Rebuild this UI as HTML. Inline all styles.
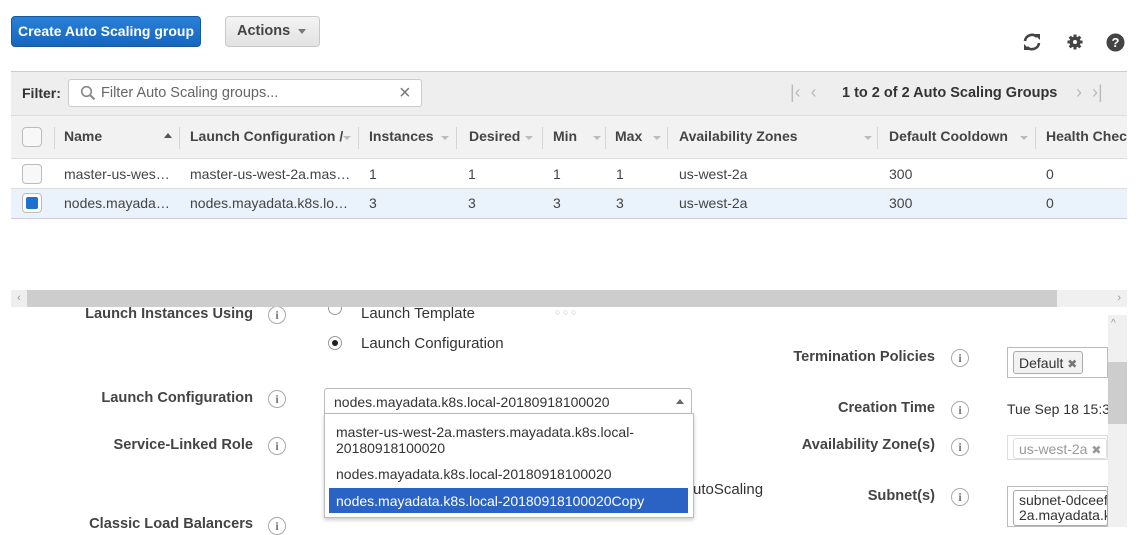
<!DOCTYPE html>
<html><head><meta charset="utf-8"><style>
*{box-sizing:border-box;margin:0;padding:0}
body{width:1141px;height:527px;overflow:hidden;background:#fff;font-family:"Liberation Sans",Arial,sans-serif;font-size:14px;color:#333;position:relative}
.a{position:absolute;white-space:nowrap}
.b{font-weight:bold;color:#333}
.hd{position:absolute;top:128px;font-weight:bold;color:#444;font-size:14px}
.dv{position:absolute;top:127px;width:1px;height:22px;background:#d5d5d5}
.ar{position:absolute;top:136px;width:0;height:0;border-left:4px solid transparent;border-right:4px solid transparent;border-top:4px solid #bbb}
.c{position:absolute;font-size:14px;color:#444}
.cb{position:absolute;left:22px;width:20px;height:20px;border:1px solid #bbb;border-radius:4px;background:#f8f8f8}
.info{position:absolute;width:18px;height:18px;border:1px solid #aaa;border-radius:50%;color:#777;font-size:12px;text-align:center;line-height:16px;font-family:"Liberation Serif",serif;font-weight:bold}
.lbl{position:absolute;font-weight:bold;color:#444;text-align:right;width:300px;font-size:14.6px}
</style></head><body>
<div class="a" style="left:11px;top:16px;width:190px;height:31px;border-radius:4px;background:linear-gradient(#2a80d8,#1666bf);border:1px solid #15599f;color:#fff;font-weight:bold;font-size:14px;line-height:29px;text-align:center">Create Auto Scaling group</div>
<div class="a" style="left:225px;top:16px;width:95px;height:31px;border-radius:4px;background:linear-gradient(#f4f4f4,#e2e2e2);border:1px solid #c8c8c8;color:#444;font-weight:bold;font-size:14.5px;line-height:29px;padding-left:11px">Actions <span style="display:inline-block;border-left:4px solid transparent;border-right:4px solid transparent;border-top:5px solid #777;vertical-align:middle;margin-left:4px"></span></div>
<svg class="a" style="left:1021px;top:32px" width="22" height="20" viewBox="0 0 22 20"><path d="M4 9a7 7 0 0 1 12-4" fill="none" stroke="#444" stroke-width="2.6"/><path d="M18 11a7 7 0 0 1-12 4" fill="none" stroke="#444" stroke-width="2.6"/><path d="M13 2l6 0 0 6z" fill="#444"/><path d="M9 18l-6 0 0-6z" fill="#444"/></svg>
<svg class="a" style="left:1066px;top:33px" width="18" height="18" viewBox="0 0 18 18"><g fill="#444"><circle cx="9" cy="9" r="5.5"/><rect x="7.5" y="1.5" width="3" height="15"/><rect x="1.5" y="7.5" width="15" height="3"/><rect x="7.5" y="1.5" width="3" height="15" transform="rotate(45 9 9)"/><rect x="7.5" y="1.5" width="3" height="15" transform="rotate(-45 9 9)"/></g><circle cx="9" cy="9" r="2" fill="#fff"/></svg>
<svg class="a" style="left:1106px;top:33px" width="19" height="19" viewBox="0 0 19 19"><circle cx="9.5" cy="9.5" r="9" fill="#444"/><text x="9.5" y="14" text-anchor="middle" fill="#fff" font-size="13" font-weight="bold" font-family="Liberation Sans">?</text></svg>

<div class="a" style="left:11px;top:71px;width:1116px;height:45px;background:#eeeeee;border-top:1px solid #ccc;border-bottom:1px solid #ddd"></div>
<div class="a b" style="left:22px;top:85px">Filter:</div>
<div class="a" style="left:68px;top:79px;width:354px;height:28px;background:#fff;border:1px solid #ccc;border-radius:3px"></div>
<svg class="a" style="left:80px;top:85px" width="16" height="16" viewBox="0 0 16 16"><circle cx="6.5" cy="6.5" r="4.8" fill="none" stroke="#888" stroke-width="1.6"/><path d="M10 10l4.5 4.5" stroke="#888" stroke-width="2"/></svg>
<div class="a" style="left:101px;top:85px;color:#666;font-size:14.5px">Filter Auto Scaling groups...</div>
<div class="a" style="left:399px;top:82px;color:#777;font-size:20px">×</div>
<div class="a" style="left:790px;top:82px;color:#bbb;font-size:18px">|‹&nbsp;&nbsp;‹</div>
<div class="a b" style="left:842px;top:85px;font-size:14.5px">1 to 2 of 2 Auto Scaling Groups</div>
<div class="a" style="left:1076px;top:82px;color:#bbb;font-size:18px">›&nbsp;&nbsp;›|</div>

<div class="a" style="left:11px;top:116px;width:1116px;height:43px;background:#f2f2f2;border-bottom:1px solid #ddd"></div>
<div class="cb" style="top:127px"></div>
<div class="dv" style="left:54px"></div><div class="hd" style="left:64px">Name</div><div class="a" style="left:164px;top:133px;border-left:4px solid transparent;border-right:4px solid transparent;border-bottom:5px solid #555"></div>
<div class="dv" style="left:179px"></div><div class="hd" style="left:190px">Launch Configuration /</div><div class="ar" style="left:343px"></div>
<div class="dv" style="left:358px"></div><div class="hd" style="left:369px">Instances</div><div class="ar" style="left:441px"></div>
<div class="dv" style="left:456px"></div><div class="hd" style="left:469px">Desired</div><div class="ar" style="left:525px"></div>
<div class="dv" style="left:542px"></div><div class="hd" style="left:553px">Min</div><div class="ar" style="left:593px"></div>
<div class="dv" style="left:605px"></div><div class="hd" style="left:615px">Max</div><div class="ar" style="left:653px"></div>
<div class="dv" style="left:667px"></div><div class="hd" style="left:679px">Availability Zones</div><div class="ar" style="left:864px"></div>
<div class="dv" style="left:877px"></div><div class="hd" style="left:889px">Default Cooldown</div><div class="ar" style="left:1020px"></div>
<div class="dv" style="left:1035px"></div><div class="hd" style="left:1046px">Health Chec</div>

<div class="a" style="left:11px;top:159px;width:1116px;height:30px;background:#fff;border-bottom:1px solid #ddd"></div>
<div class="cb" style="top:164px"></div>
<div class="c" style="left:64px;top:166px">master-us-wes…</div><div class="c" style="left:190px;top:166px">master-us-west-2a.mas…</div><div class="c" style="left:369px;top:166px">1</div><div class="c" style="left:468px;top:166px">1</div><div class="c" style="left:553px;top:166px">1</div><div class="c" style="left:616px;top:166px">1</div><div class="c" style="left:679px;top:166px">us-west-2a</div><div class="c" style="left:889px;top:166px">300</div><div class="c" style="left:1046px;top:166px">0</div>
<div class="a" style="left:11px;top:189px;width:1116px;height:30px;background:#eaf2fc;border-bottom:1px solid #ccd"></div>
<div class="cb" style="top:193px;background:#fff"></div><div class="a" style="left:26px;top:197px;width:12px;height:12px;background:#1d6fd0;border-radius:2px"></div>
<div class="c" style="left:64px;top:195px">nodes.mayada…</div><div class="c" style="left:190px;top:195px">nodes.mayadata.k8s.lo…</div><div class="c" style="left:369px;top:195px">3</div><div class="c" style="left:468px;top:195px">3</div><div class="c" style="left:553px;top:195px">3</div><div class="c" style="left:616px;top:195px">3</div><div class="c" style="left:679px;top:195px">us-west-2a</div><div class="c" style="left:889px;top:195px">300</div><div class="c" style="left:1046px;top:195px">0</div>

<div class="a" style="left:11px;top:290px;width:1116px;height:17px;background:#cdcdcd"></div>
<div class="a" style="left:11px;top:290px;width:16px;height:17px;background:#eee;color:#999;font-size:11px;text-align:center;line-height:17px">‹</div>
<div class="a" style="left:1057px;top:290px;width:70px;height:17px;background:#f0f0f0;color:#999;font-size:11px;text-align:right;padding-right:6px;line-height:17px">›</div>

<div class="a" style="left:0;top:307px;width:1108px;height:220px;overflow:hidden">
<div class="lbl" style="left:-47px;top:-1px">Launch Instances Using</div>
<div class="info" style="left:268px;top:-1px">i</div>
<div class="a" style="left:328px;top:-6px;width:14px;height:14px;border:1px solid #999;border-radius:50%"></div>
<div class="a" style="left:361px;top:-2px;font-size:15px">Launch Template</div>
<div class="a" style="left:555px;top:0px;color:#bbb;font-size:9px">○ ○ ○</div>
</div>
<div class="a" style="left:328px;top:336px;width:14px;height:14px;border:1px solid #999;border-radius:50%;background:#fff"></div>
<div class="a" style="left:332px;top:340px;width:6px;height:6px;border-radius:50%;background:#222"></div>
<div class="a" style="left:361px;top:335px;font-size:15px">Launch Configuration</div>

<div class="lbl" style="left:-47px;top:390px">Launch Configuration</div><div class="info" style="left:268px;top:390px">i</div>
<div class="lbl" style="left:-47px;top:437px">Service-Linked Role</div><div class="info" style="left:268px;top:437px">i</div>
<div class="lbl" style="left:-47px;top:516px">Classic Load Balancers</div><div class="info" style="left:268px;top:517px">i</div>
<div class="a" style="left:693px;top:481px;font-size:15px">utoScaling</div>

<div class="a" style="left:324px;top:388px;width:368px;height:27px;border:1px solid #bbb;border-radius:3px;background:#fff"></div>
<div class="a" style="left:334px;top:394px;font-size:14px">nodes.mayadata.k8s.local-20180918100020</div>
<div class="a" style="left:676px;top:399px;border-left:4px solid transparent;border-right:4px solid transparent;border-bottom:5px solid #666"></div>
<div class="a" style="left:324px;top:413px;width:370px;height:105px;border:1px solid #bbb;background:#fff;box-shadow:0 2px 4px rgba(0,0,0,.2)"></div>
<div class="a" style="left:336px;top:424px;font-size:14px;line-height:16px">master-us-west-2a.masters.mayadata.k8s.local-<br>20180918100020</div>
<div class="a" style="left:336px;top:466px;font-size:14px">nodes.mayadata.k8s.local-20180918100020</div>
<div class="a" style="left:329px;top:488px;width:359px;height:25px;background:#2b63c4"></div>
<div class="a" style="left:336px;top:493px;font-size:14px;color:#fff">nodes.mayadata.k8s.local-20180918100020Copy</div>

<div class="lbl" style="left:635px;top:349px">Termination Policies</div><div class="info" style="left:951px;top:349px">i</div>
<div class="a" style="left:1007px;top:347px;width:101px;height:31px;border:1px solid #bbb"></div>
<div class="a" style="left:1013px;top:351px;height:23px;border:1px solid #aaa;border-radius:3px;background:#f2f2f2;padding:3px 5px;font-size:14px">Default <span style="color:#777;font-size:12px">✖</span></div>
<div class="lbl" style="left:635px;top:400px">Creation Time</div><div class="info" style="left:951px;top:401px">i</div>
<div class="a" style="left:1007px;top:401px;font-size:14px">Tue Sep 18 15:3</div>
<div class="lbl" style="left:635px;top:437px">Availability Zone(s)</div><div class="info" style="left:951px;top:438px">i</div>
<div class="a" style="left:1007px;top:435px;width:101px;height:25px;border:1px solid #ddd"></div>
<div class="a" style="left:1013px;top:438px;height:21px;border:1px solid #ddd;border-radius:3px;padding:2px 5px;font-size:14px;color:#999">us-west-2a <span style="font-size:12px">✖</span></div>
<div class="lbl" style="left:635px;top:488px">Subnet(s)</div><div class="info" style="left:951px;top:488px">i</div>
<div class="a" style="left:1007px;top:486px;width:101px;height:41px;border:1px solid #bbb"></div>
<div class="a" style="left:1013px;top:490px;width:95px;height:36px;border:1px solid #aaa;border-radius:3px;padding:2px 5px;font-size:14px;line-height:15px;overflow:hidden">subnet-0dceef8<br>2a.mayadata.k</div>

<div class="a" style="left:1108px;top:315px;width:19px;height:212px;background:#f0f0f0"></div>
<div class="a" style="left:1108px;top:362px;width:19px;height:62px;background:#cdcdcd"></div>
<div class="a" style="left:1111px;top:318px;color:#999;font-size:10px">^</div>
</body></html>
